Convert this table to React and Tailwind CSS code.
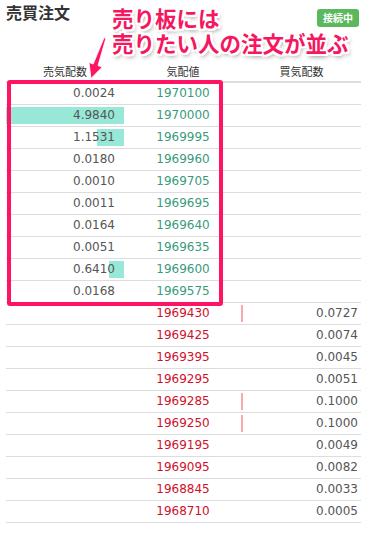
import React from 'react';

const ASKS = [
  [0.0024, 1970100],
  [4.984, 1970000],
  [1.1531, 1969995],
  [0.018, 1969960],
  [0.001, 1969705],
  [0.0011, 1969695],
  [0.0164, 1969640],
  [0.0051, 1969635],
  [0.641, 1969600],
  [0.0168, 1969575],
];

const BIDS = [
  [1969430, 0.0727],
  [1969425, 0.0074],
  [1969395, 0.0045],
  [1969295, 0.0051],
  [1969285, 0.1],
  [1969250, 0.1],
  [1969195, 0.0049],
  [1969095, 0.0082],
  [1968845, 0.0033],
  [1968710, 0.0005],
];

const MAX = Math.max(...ASKS.map(a => a[0]), ...BIDS.map(b => b[1]));
const COL_W = 118;

const barWidth = (v) => {
  const w = (v / MAX) * COL_W;
  return w < 1 ? 0 : w;
};

function AskRow({ size, price }) {
  const w = barWidth(size);
  return (
    <div className="grid grid-cols-[118px_118px_119px] h-[22px] border-b border-[#dddddd]">
      <div className="relative flex items-center justify-end pr-[9px]">
        {w > 0 && (
          <div className="absolute right-0 top-[2px] bottom-[2px] bg-[#97e8d7]" style={{ width: w }} />
        )}
        <span className="relative text-[#555555]">{size.toFixed(4)}</span>
      </div>
      <div className="flex items-center justify-center text-[#3a9b7b]">{price}</div>
      <div />
    </div>
  );
}

function BidRow({ size, price }) {
  const w = barWidth(size);
  return (
    <div className="grid grid-cols-[118px_118px_119px] h-[22px] border-b border-[#dddddd]">
      <div />
      <div className="flex items-center justify-center text-[#d0112b]">{price}</div>
      <div className="relative flex items-center justify-end pr-[3px]">
        {w > 0 && (
          <div className="absolute left-[-1px] top-[2px] bottom-[2px] bg-[#f7a9ac]" style={{ width: w }} />
        )}
        <span className="relative text-[#555555]">{size.toFixed(4)}</span>
      </div>
    </div>
  );
}

export default function App() {
  return (
    <div className="relative w-[368px] h-[534px] bg-white overflow-hidden font-['Noto_Sans_CJK_JP',sans-serif] text-[#333333]">
      {/* Header */}
      <div className="flex items-start justify-between pl-[6px] pr-[9px]">
        <h1 className="text-[16px] leading-[24px] font-bold">売買注文</h1>
        <span className="mt-[9px] h-[18px] px-[6px] rounded-[3px] bg-[#5cb85c] text-white text-[10px] font-bold leading-[18px]">
          接続中
        </span>
      </div>

      {/* Order book */}
      <div className="mt-[34px] ml-[6px] w-[355px]">
        <div className="grid grid-cols-[118px_118px_119px] h-[22px] border-b-2 border-[#dddddd] text-[11px] leading-[20px]">
          <div className="text-center">売気配数</div>
          <div className="text-center">気配値</div>
          <div className="text-center">買気配数</div>
        </div>
        <div className="font-['DejaVu_Sans',sans-serif] text-[12px] leading-[21px]">
          {ASKS.map(([size, price]) => (
            <AskRow key={price} size={size} price={price} />
          ))}
          {BIDS.map(([price, size]) => (
            <BidRow key={price} size={size} price={price} />
          ))}
        </div>
      </div>

      {/* Annotation overlay */}
      <div className="absolute left-[7px] top-[80px] w-[216px] h-[226px] border-4 border-[#ff1464] rounded-[3px] pointer-events-none" />
      <svg className="absolute left-0 top-0 pointer-events-none" width="368" height="100" viewBox="0 0 368 100">
        <polygon
          points="104.1,37.7 105.9,38.3 98,65.6 102.2,67.1 91,78.5 89,62.5 93.2,64"
          fill="#ff1464"
          stroke="#ffffff"
          strokeWidth="0.8"
          strokeLinejoin="round"
        />
      </svg>
      <div className="absolute left-[112px] top-[5px] text-[21.5px] leading-[25px] font-bold text-[#f5175f] tracking-[0px] [text-shadow:-2px_-2px_0_#fff,2px_-2px_0_#fff,-2px_2px_0_#fff,2px_2px_0_#fff,0_-2px_0_#fff,0_2px_0_#fff,-2px_0_0_#fff,2px_0_0_#fff,2px_3px_4px_rgba(0,0,0,0.45)]">
        <div>売り板には</div>
        <div>売りたい人の注文が並ぶ</div>
      </div>
    </div>
  );
}
